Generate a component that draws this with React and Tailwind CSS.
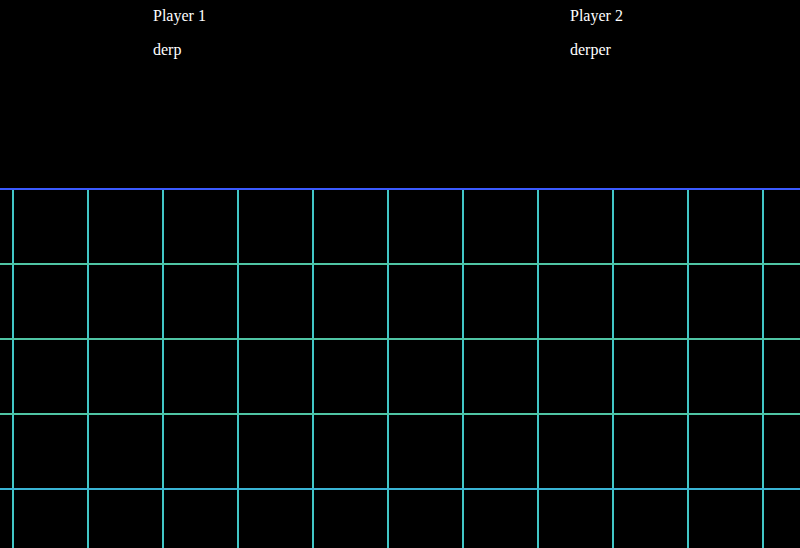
export default function App() {
  const rowColors = ["border-b-[#4fc4a4]", "border-b-[#4fc4a4]", "border-b-[#4fc4a4]", "border-b-[#3ab4d4]", "border-b-[#4fc4a4]"];
  return (
    <div className="w-[800px] h-[548px] bg-black overflow-hidden text-white" style={{ fontFamily: '"Liberation Serif", "Times New Roman", serif' }}>
      <div className="h-[188px] flex">
        <div className="ml-[153px] w-[417px] pt-[7px] text-[16px] leading-[18px]">
          <p>Player 1</p>
          <p className="mt-[16px]">derp</p>
        </div>
        <div className="pt-[7px] text-[16px] leading-[18px]">
          <p>Player 2</p>
          <p className="mt-[16px]">derper</p>
        </div>
      </div>
      <div className="border-t-2 border-t-[#3b5bff]">
        {rowColors.map((c, r) => (
          <div key={r} className={`h-[75px] border-b-2 ${c} flex pl-[12px]`}>
            {Array.from({ length: 11 }).map((_, i) => (
              <div key={i} className="w-[75px] shrink-0 border-l-2 border-l-[#42c6c6]" />
            ))}
          </div>
        ))}
      </div>
    </div>
  );
}
